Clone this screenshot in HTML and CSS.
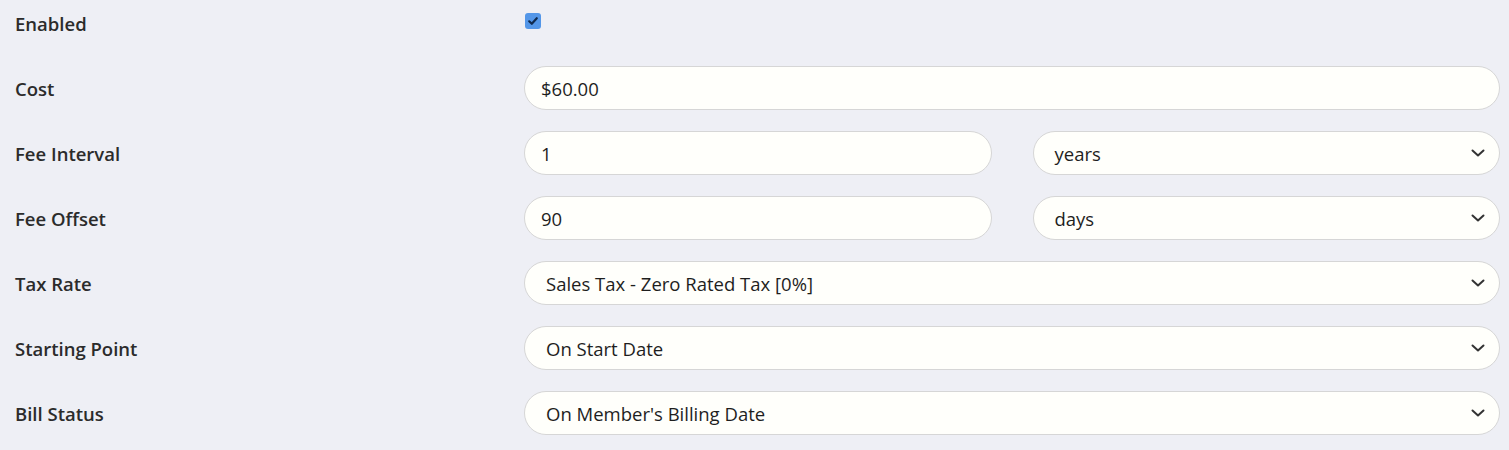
FILE: index.html
```html
<!DOCTYPE html>
<html>
<head>
<meta charset="utf-8">
<link rel="stylesheet" href="styles.css">
</head>
<body>
<div class="form">
  <div class="row">
    <div class="label">Enabled</div>
    <div class="field">
      <span class="checkbox"><svg width="12" height="12" viewBox="0 0 12 12"><path d="M2.2 6.3 L4.8 8.8 L9.8 3.2" fill="none" stroke="#0f2a4f" stroke-width="2.2" stroke-linecap="round" stroke-linejoin="round"/></svg></span>
    </div>
  </div>
  <div class="row">
    <div class="label">Cost</div>
    <div class="field"><div class="input">$60.00</div></div>
  </div>
  <div class="row">
    <div class="label">Fee Interval</div>
    <div class="field split">
      <div class="input">1</div>
      <div class="select"><span>years</span><svg class="chev" width="14" height="8" viewBox="0 0 14 8"><path d="M1.5 1.5 L7 6.5 L12.5 1.5" fill="none" stroke="#333" stroke-width="2" stroke-linecap="round" stroke-linejoin="round"/></svg></div>
    </div>
  </div>
  <div class="row">
    <div class="label">Fee Offset</div>
    <div class="field split">
      <div class="input">90</div>
      <div class="select"><span>days</span><svg class="chev" width="14" height="8" viewBox="0 0 14 8"><path d="M1.5 1.5 L7 6.5 L12.5 1.5" fill="none" stroke="#333" stroke-width="2" stroke-linecap="round" stroke-linejoin="round"/></svg></div>
    </div>
  </div>
  <div class="row">
    <div class="label">Tax Rate</div>
    <div class="field">
      <div class="select"><span>Sales Tax - Zero Rated Tax [0%]</span><svg class="chev" width="14" height="8" viewBox="0 0 14 8"><path d="M1.5 1.5 L7 6.5 L12.5 1.5" fill="none" stroke="#333" stroke-width="2" stroke-linecap="round" stroke-linejoin="round"/></svg></div>
    </div>
  </div>
  <div class="row">
    <div class="label">Starting Point</div>
    <div class="field">
      <div class="select"><span>On Start Date</span><svg class="chev" width="14" height="8" viewBox="0 0 14 8"><path d="M1.5 1.5 L7 6.5 L12.5 1.5" fill="none" stroke="#333" stroke-width="2" stroke-linecap="round" stroke-linejoin="round"/></svg></div>
    </div>
  </div>
  <div class="row">
    <div class="label">Bill Status</div>
    <div class="field">
      <div class="select"><span>On Member's Billing Date</span><svg class="chev" width="14" height="8" viewBox="0 0 14 8"><path d="M1.5 1.5 L7 6.5 L12.5 1.5" fill="none" stroke="#333" stroke-width="2" stroke-linecap="round" stroke-linejoin="round"/></svg></div>
    </div>
  </div>
</div>
</body>
</html>
```

FILE: styles.css
```css
html, body {
  margin: 0;
  padding: 0;
  background: #eeeff5;
}
body {
  font-family: "Open Sans", "Noto Sans", sans-serif;
  color: #222;
}
.form {
  display: flex;
  flex-direction: column;
  gap: 21px;
  padding: 1px 9px 0 15px;
}
.row {
  display: grid;
  grid-template-columns: 509px 1fr;
  align-items: center;
  height: 44px;
}
.label {
  font-size: 18.5px;
  font-weight: 600;
  color: #2b2b2b;
}
.field {
  display: flex;
  align-items: center;
}
.split {
  display: grid;
  grid-template-columns: 1fr 1fr;
  gap: 41px;
}
.checkbox {
  width: 16px;
  height: 16px;
  margin-left: 1px;
  margin-top: -4px;
  border-radius: 3px;
  background: #5396e8;
  display: flex;
  align-items: center;
  justify-content: center;
}
.input, .select {
  box-sizing: border-box;
  flex: 1;
  height: 44px;
  border: 1px solid #d6d6d6;
  border-radius: 22px;
  background: #fffffb;
  font-size: 18.5px;
  color: #1e1e1e;
  display: flex;
  align-items: center;
}
.input {
  padding-left: 16px;
}
.select {
  padding-left: 21px;
  padding-right: 14px;
  justify-content: space-between;
}
.chev {
  display: block;
}
```
